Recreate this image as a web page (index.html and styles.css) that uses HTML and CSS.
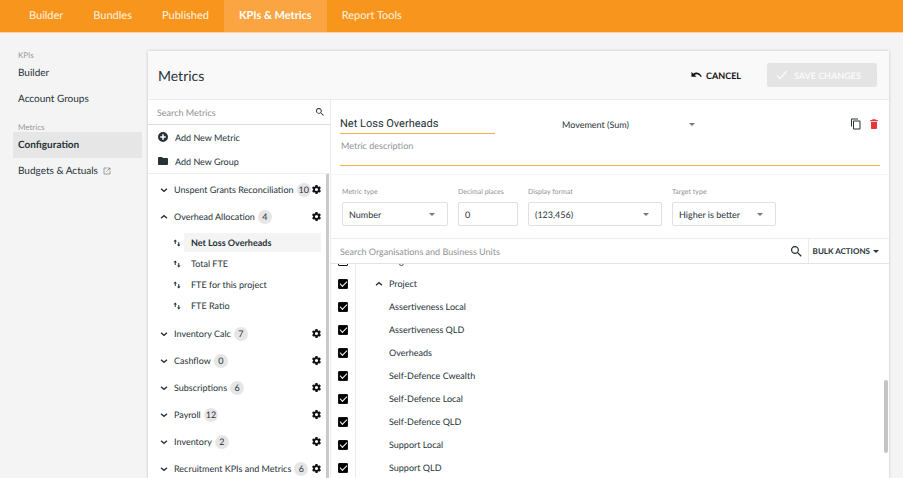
FILE: index.html
```html
<!DOCTYPE html>
<html lang="en">
<head>
  <meta charset="UTF-8" />
  <meta name="viewport" content="width=device-width,initial-scale=1.0" />
  <title>KPIs &amp; Metrics</title>
  <link rel="stylesheet" href="styles.css">
</head>

<body>
  <!-- shared icons -->
  <svg class="sprite" aria-hidden="true">
    <symbol id="i-down" viewBox="0 0 24 24"><path d="M3 8l9 8 9-8" fill="none" stroke="currentColor" stroke-width="4"/></symbol>
    <symbol id="i-up" viewBox="0 0 24 24"><path d="M3 16l9-8 9 8" fill="none" stroke="currentColor" stroke-width="4"/></symbol>
    <symbol id="i-gear" viewBox="2 2 20 20"><path fill-rule="evenodd" d="M19.4 13a7.8 7.8 0 0 0 0-2l2.1-1.600a.5.5 0 0 0 .1-.6l-2-3.500a.5.5 0 0 0-.6-.2l-2.500 1a7.300 7.300 0 0 0-1.700-1l-.4-2.600a.5.5 0 0 0-.5-.4h-4a.5.5 0 0 0-.5.4l-.4 2.600a7.700 7.700 0 0 0-1.700 1l-2.500-1a.5.5 0 0 0-.6.2l-2 3.500a.5.5 0 0 0 .1.6L4.600 11a7.800 7.800 0 0 0 0 2l-2.100 1.600a.5.5 0 0 0-.1.6l2 3.500c.1.2.4.3.6.2l2.500-1c.5.4 1.100.7 1.700 1l.4 2.600c0 .2.2.4.5.4h4c.3 0 .5-.2.5-.4l.4-2.600a7.300 7.300 0 0 0 1.700-1l2.500 1c.2.1.5 0 .6-.2l2-3.500a.5.5 0 0 0-.1-.6zM12 15.500a3.500 3.500 0 1 1 0-7 3.500 3.500 0 0 1 0 7z"/></symbol>
    <symbol id="i-sort" viewBox="0 0 16 16"><path d="M4.500 10V2M11.500 6v8" fill="none" stroke="currentColor" stroke-width="2"/><path d="M1 5l3.500-4L8 5zM8 11l3.500 4 3.500-4z"/></symbol>
    <symbol id="i-search" viewBox="3 3 18 18"><path d="M15.500 14h-.8l-.3-.3a6.500 6.500 0 1 0-.7.7l.3.3v.8l5 5 1.500-1.500zm-6 0a4.500 4.500 0 1 1 0-9 4.500 4.500 0 0 1 0 9z"/></symbol>
  </svg>

  <nav class="topnav">
    <a href="#">Builder</a>
    <a href="#">Bundles</a>
    <a href="#">Published</a>
    <a href="#" class="active">KPIs &amp; Metrics</a>
    <a href="#">Report Tools</a>
  </nav>

  <div class="layout">
    <aside class="sidebar">
      <h2>KPIs</h2>
      <a href="#">Builder</a>
      <a href="#">Account Groups</a>
      <h2>Metrics</h2>
      <a href="#" class="active">Configuration</a>
      <a href="#">Budgets &amp; Actuals
        <svg class="external" viewBox="0 0 24 24"><path d="M12 3H3v18h18v-9M14 3h7v7M21 3L10 14" fill="none" stroke="currentColor" stroke-width="2"/></svg>
      </a>
    </aside>

    <main class="panel">
      <header class="panel-head">
        <h1>Metrics</h1>
        <button class="cancel">
          <svg viewBox="0 0 24 16"><path d="M1 1v11h11L8 8c4-3 10-1.500 13 4.500l2.500-1C20 3 11 .5 5 5z"/></svg>
          CANCEL
        </button>
        <button class="save" disabled>
          <svg viewBox="0 0 24 24"><path d="M2 13l6 6L22 4" fill="none" stroke="currentColor" stroke-width="2.500"/></svg>
          SAVE CHANGES
        </button>
      </header>

      <div class="columns">
        <section class="metrics">
          <div class="search">
            <input type="text" placeholder="Search Metrics" aria-label="Search Metrics">
            <svg><use href="#i-search"/></svg>
          </div>
          <div class="add">
            <button>
              <svg viewBox="2 2 20 20"><path fill-rule="evenodd" d="M12 2a10 10 0 1 0 0 20 10 10 0 0 0 0-20zm5.500 11.500h-4v4h-3v-4h-4v-3h4v-4h3v4h4z"/></svg>
              Add New Metric
            </button>
            <button>
              <svg viewBox="2 3 20 18"><path d="M10 4H4a2 2 0 0 0-2 2v12c0 1.100.9 2 2 2h16a2 2 0 0 0 2-2V8a2 2 0 0 0-2-2h-8z"/></svg>
              Add New Group
            </button>
          </div>

          <ul class="groups">
            <li class="group"><svg class="chev"><use href="#i-down"/></svg>Unspent Grants Reconciliation<span class="count">10</span><svg class="gear"><use href="#i-gear"/></svg></li>
            <li class="group"><svg class="chev"><use href="#i-up"/></svg>Overhead Allocation<span class="count">4</span><svg class="gear"><use href="#i-gear"/></svg></li>
            <li>
              <ul class="items">
                <li><svg><use href="#i-sort"/></svg><a href="#" class="active">Net Loss Overheads</a></li>
                <li><svg><use href="#i-sort"/></svg><a href="#">Total FTE</a></li>
                <li><svg><use href="#i-sort"/></svg><a href="#">FTE for this project</a></li>
                <li><svg><use href="#i-sort"/></svg><a href="#">FTE Ratio</a></li>
              </ul>
            </li>
            <li class="group"><svg class="chev"><use href="#i-down"/></svg>Inventory Calc<span class="count">7</span><svg class="gear"><use href="#i-gear"/></svg></li>
            <li class="group"><svg class="chev"><use href="#i-down"/></svg>Cashflow<span class="count">0</span><svg class="gear"><use href="#i-gear"/></svg></li>
            <li class="group"><svg class="chev"><use href="#i-down"/></svg>Subscriptions<span class="count">6</span><svg class="gear"><use href="#i-gear"/></svg></li>
            <li class="group"><svg class="chev"><use href="#i-down"/></svg>Payroll<span class="count">12</span><svg class="gear"><use href="#i-gear"/></svg></li>
            <li class="group"><svg class="chev"><use href="#i-down"/></svg>Inventory<span class="count">2</span><svg class="gear"><use href="#i-gear"/></svg></li>
            <li class="group"><svg class="chev"><use href="#i-down"/></svg>Recruitment KPIs and Metrics<span class="count">6</span><svg class="gear"><use href="#i-gear"/></svg></li>
          </ul>
        </section>

        <section class="detail">
          <div class="about">
            <div class="title-row">
              <input class="name" type="text" value="Net Loss Overheads" aria-label="Metric name">
              <div class="select plain">
                <select aria-label="Calculation"><option>Movement (Sum)</option></select>
              </div>
              <button class="icon" aria-label="Copy">
                <svg class="copy" viewBox="0 0 24 24"><path d="M16 1H4a2 2 0 0 0-2 2v14h2V3h12zm3 4H8a2 2 0 0 0-2 2v14c0 1.100.9 2 2 2h11a2 2 0 0 0 2-2V7a2 2 0 0 0-2-2zm0 16H8V7h11z"/></svg>
              </button>
              <button class="icon" aria-label="Delete">
                <svg class="trash" viewBox="4 2 16 20"><path d="M6 20c0 1.100.9 2 2 2h8a2 2 0 0 0 2-2V8H6zM19.500 4H16l-1-1.500H9L8 4H4.500v2.500h15z"/></svg>
              </button>
            </div>
            <textarea class="desc" placeholder="Metric description" aria-label="Metric description"></textarea>
          </div>

          <div class="fields">
            <div class="field type">
              <label for="type">Metric type</label>
              <div class="select"><select id="type"><option>Number</option></select></div>
            </div>
            <div class="field places">
              <label for="places">Decimal places</label>
              <input id="places" type="text" value="0">
            </div>
            <div class="field format">
              <label for="format">Display format</label>
              <div class="select"><select id="format"><option>(123,456)</option></select></div>
            </div>
            <div class="field target">
              <label for="target">Target type</label>
              <div class="select"><select id="target"><option>Higher is better</option></select></div>
            </div>
          </div>

          <div class="toolbar">
            <input type="text" placeholder="Search Organisations and Business Units" aria-label="Search Organisations and Business Units">
            <svg><use href="#i-search"/></svg>
            <button class="bulk">BULK ACTIONS</button>
          </div>

          <div class="tree">
            <ul>
              <li><input type="checkbox" id="u0"><label for="u0"><svg><use href="#i-up"/></svg>Region</label></li>
              <li><input type="checkbox" id="u1" checked><label for="u1"><svg><use href="#i-up"/></svg>Project</label></li>
              <li><input type="checkbox" id="u2" checked><label for="u2" class="leaf">Assertiveness Local</label></li>
              <li><input type="checkbox" id="u3" checked><label for="u3" class="leaf">Assertiveness QLD</label></li>
              <li><input type="checkbox" id="u4" checked><label for="u4" class="leaf">Overheads</label></li>
              <li><input type="checkbox" id="u5" checked><label for="u5" class="leaf">Self-Defence Cwealth</label></li>
              <li><input type="checkbox" id="u6" checked><label for="u6" class="leaf">Self-Defence Local</label></li>
              <li><input type="checkbox" id="u7" checked><label for="u7" class="leaf">Self-Defence QLD</label></li>
              <li><input type="checkbox" id="u8" checked><label for="u8" class="leaf">Support Local</label></li>
              <li><input type="checkbox" id="u9" checked><label for="u9" class="leaf">Support QLD</label></li>
            </ul>
            <div class="thumb"></div>
          </div>
        </section>
      </div>
    </main>
  </div>
</body>
</html>
```
FILE: styles.css
```css
:root {
  --orange: #f8951d;
  --underline: #f9ad52;
  --text: #263238;
  --muted: #8f9395;
  --line: #ececec;
}
*{box-sizing:border-box;}
body{
  margin:0;
  height:100vh;
  overflow:hidden;
  display:flex;
  flex-direction:column;
  font-family:Lato,"Liberation Sans",sans-serif;
  font-size:9px;
  text-rendering:geometricPrecision;
  color:var(--text);
  background:#f4f4f4;
}
h1,h2,ul{margin:0;padding:0;font-weight:400;list-style:none;}
a{color:inherit;text-decoration:none;}
svg{fill:currentColor;flex:none;}
.sprite{display:none;}
input,select,textarea,button{
  font:inherit;
  color:inherit;
  text-rendering:inherit;
  margin:0;
  padding:0;
  border:0;
  background:transparent;
  outline:none;
}
button{display:flex;align-items:center;}
::placeholder{color:var(--muted);opacity:1;}

/* top navigation */
.topnav{
  flex:none;
  display:flex;
  height:33px;
  padding-left:14px;
  background:var(--orange);
  border-bottom:1px solid #fbd3a0;
  font-size:11px;
  color:#fff3e2;
}
.topnav a{padding:0 15px;line-height:32px;}
.topnav .active{background:#faa442;color:#fff;font-weight:700;}

.layout{flex:1;display:flex;min-height:0;}

/* sidebar */
.sidebar{
  flex:none;
  width:148px;
  padding:7px 6px 0 13px;
  font-size:10px;
}
.sidebar h2{margin-top:10px;padding-left:5px;font-size:8px;line-height:10px;color:#999;}
.sidebar a{
  display:flex;
  align-items:center;
  gap:5px;
  height:26px;
  padding-left:5px;
}
.sidebar a.active{background:#e6e6e6;font-weight:700;}
.external{width:8px;height:8px;color:#777;}

/* panel */
.panel{
  flex:1;
  min-width:0;
  display:flex;
  flex-direction:column;
  margin:18px 14px 0 0;
  background:#fff;
  box-shadow:0 0 3px rgba(0,0,0,.2);
}
.panel-head{
  flex:none;
  display:flex;
  align-items:center;
  height:49px;
  padding:0 12px 0 10px;
  background:#f9f9f9;
  border-bottom:1px solid var(--line);
}
.panel-head h1{flex:1;font-size:14px;}
.cancel{gap:4px;margin-right:26px;font-weight:700;color:#111;}
.cancel svg{width:11px;height:8px;}
.save{
  gap:6px;
  width:110px;
  height:24px;
  padding-left:9px;
  border-radius:2px;
  background:#e4e4e4;
  color:#fafafa;
  font-weight:700;
}
.save svg{width:12px;height:12px;}

.columns{flex:1;display:flex;min-height:0;}

/* metric list */
.metrics{
  flex:none;
  width:183px;
  display:flex;
  flex-direction:column;
  border-right:1px solid var(--line);
}
.search{
  flex:none;
  display:flex;
  align-items:center;
  height:25px;
  padding:0 6px 0 9px;
  border-bottom:1px solid #ddd;
}
.search input{flex:1;min-width:0;}
.search svg{width:8px;height:8px;}
.add{flex:none;border-bottom:1px solid var(--line);}
.add button{gap:7px;width:100%;height:24px;padding-left:10px;}
.add svg{width:10px;height:10px;}
.groups{
  flex:1;
  min-height:0;
  overflow:hidden;
  margin-right:1px;
  padding:2px 5px 0 12px;
  border-right:3px solid #c9c9c9;
}
.group{display:flex;align-items:center;height:27px;white-space:nowrap;}
.chev{width:8px;height:8px;margin-right:6px;}
.count{
  min-width:14px;
  height:14px;
  margin-left:3px;
  padding:0 2px;
  border-radius:7px;
  background:#e6e6e6;
  line-height:14px;
  text-align:center;
}
.gear{width:9px;height:9px;margin-left:auto;color:#111;}
.items{padding:2px 0 4px 13px;}
.items li{display:flex;align-items:center;height:21px;}
.items svg{width:8px;height:8px;margin-right:3px;}
.items a{flex:1;padding-left:7px;line-height:19px;}
.items .active{background:#f4f4f4;font-weight:700;}

/* metric detail */
.detail{flex:1;min-width:0;display:flex;flex-direction:column;}
.about{flex:none;padding:12px 9px 8px;border-bottom:1px solid #f5f5f5;}
.title-row{display:flex;align-items:center;}
.name{
  width:155px;
  height:20px;
  margin-right:67px;
  border-bottom:1px solid var(--underline);
  font-family:Roboto,"Liberation Sans",sans-serif;
  font-size:11px;
}
.icon{margin-left:8px;}
.select.plain + .icon{margin-left:auto;}
.copy{width:12px;height:12px;}
.trash{width:8px;height:10px;margin-right:2px;color:#e5383b;}
.desc{
  display:block;
  width:100%;
  height:30px;
  padding:4px 1px;
  border-bottom:1px solid var(--underline);
  resize:none;
}

/* select with its own arrow */
.select{display:grid;align-items:center;}
.select select{grid-area:1/1;width:100%;height:24px;appearance:none;}
.select::after{
  content:"";
  grid-area:1/1;
  justify-self:end;
  margin-right:13px;
  border:3px solid transparent;
  border-top-color:#777;
  border-bottom:0;
  pointer-events:none;
}
.select.plain{width:146px;}

.fields{
  flex:none;
  display:flex;
  gap:10px;
  padding:12px 11px;
  border-bottom:1px solid var(--line);
}
.field label{display:block;margin-bottom:5px;font-size:7px;line-height:10px;color:var(--muted);}
.field select,
.field input{
  width:100%;
  height:24px;
  padding-left:6px;
  border:1px solid #e0e0e0;
  border-radius:2px;
}
.type{width:106px;}
.places{width:60px;}
.format{width:134px;}
.target{width:104px;}

.toolbar{
  flex:none;
  display:flex;
  align-items:center;
  height:25px;
  padding-left:9px;
  border-bottom:1px solid #e4e4e4;
}
.toolbar input{flex:1;}
.toolbar svg{width:11px;height:11px;margin-right:6px;}
.bulk{
  gap:3px;
  height:100%;
  padding:0 10px 0 4px;
  border-left:1px solid var(--line);
  font-size:8px;
  font-weight:700;
}
.bulk::after{
  content:"";
  border:3px solid transparent;
  border-top-color:currentColor;
  border-bottom:0;
}

/* business unit tree */
.tree{flex:1;display:flex;min-height:0;overflow:hidden;}
.tree ul{flex:1;margin-top:-15px;}
.tree li{display:flex;align-items:center;height:23px;}
.tree input{
  appearance:none;
  flex:none;
  width:10px;
  height:10px;
  margin:0 7px;
  border:1px solid #111;
  border-radius:1px;
}
.tree input:checked{display:grid;place-items:center;background:#000;}
.tree input:checked::after{
  content:"";
  width:6px;
  height:3px;
  border:solid #fff;
  border-width:0 0 1px 1px;
  transform:translateY(-1px) rotate(-45deg);
}
.tree label{
  flex:1;
  display:flex;
  align-items:center;
  height:100%;
  padding-left:19px;
  border-left:1px solid var(--line);
}
.tree label svg{width:8px;height:8px;margin-right:6px;}
.tree .leaf{padding-left:33px;}
.thumb{width:4px;height:73px;margin:116px 1px 0 0;background:#c4c4c4;border-radius:2px;}
```
